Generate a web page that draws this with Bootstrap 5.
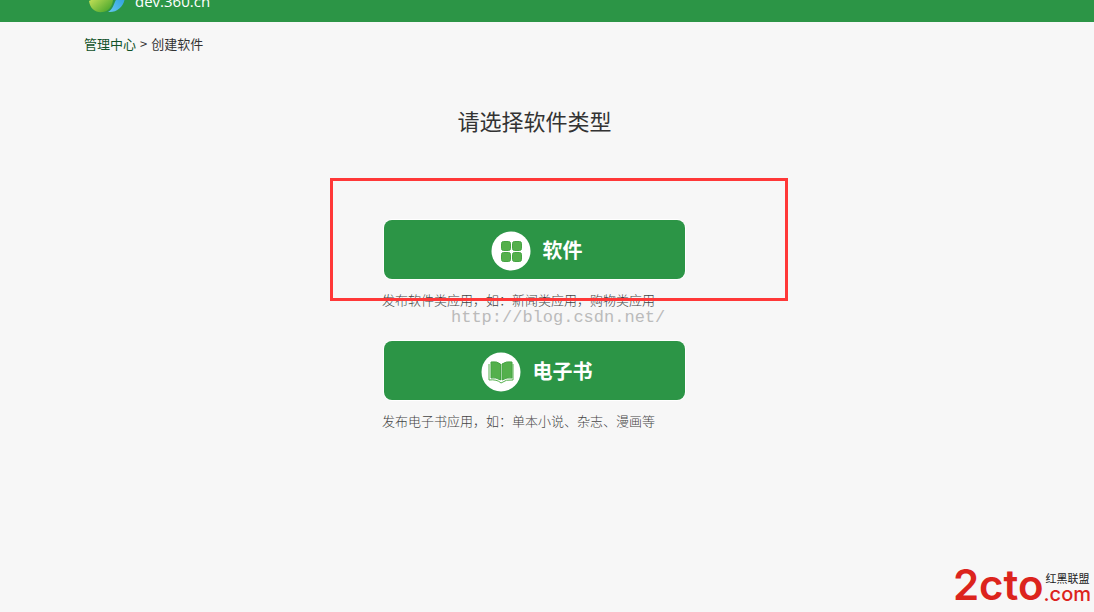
<!DOCTYPE html>
<html lang="zh-CN">
<head>
<meta charset="utf-8">
<meta name="viewport" content="width=device-width, initial-scale=1">
<title>创建软件</title>
<link href="https://cdn.jsdelivr.net/npm/bootstrap@5.3.0/dist/css/bootstrap.min.css" rel="stylesheet">
<style>
body { background: #f7f7f7; color: #333; font: 13px/20px "Noto Sans CJK SC", sans-serif; }
.topbar { height: 22px; background: #2c9546; }
.page-inset { padding-left: 84px; padding-right: 109px; }
.brand-link { color: #fff; font: 15px/20px "Open Sans", sans-serif; gap: 10px; padding-left: 5px; }
.brand-link span { padding-bottom: 3px; }
.crumbs a { color: #11522a; }
.crumbs { padding-top: 12px; gap: 4px; }
.page-title { font-size: 22px; line-height: 32px; font-weight: 400; margin: 50px 0 84px; }
.choices { width: 301px; gap: 31px; }
.type-btn { height: 59px; background: #2c9546; color: #fff; border: 0; border-radius: 8px; font-size: 20px; font-weight: 700; gap: 12px; box-shadow: 0 0 0 1px #fff; padding: 2px 0 0 4px; }
.type-btn:hover { background: #268640; color: #fff; }
.type-btn span { padding-bottom: 2px; }
.type-note { color: #444; margin: 11px -10px 0 -2px; font-weight: 300; white-space: nowrap; }
.highlight-frame { inset: -42px -103px auto -54px; height: 123px; border: 3px solid #ff3838; pointer-events: none; }
.watermark { left: 67px; top: 88px; color: #bbb; font: 17px/20px "Liberation Mono", monospace; }
.site-mark { right: 3px; bottom: 8px; color: #dc241d; font-family: Inter, sans-serif; }
.mark-main { font-size: 42px; line-height: 42px; font-weight: 600; margin-bottom: -2px; }
.mark-side { font-size: 20px; line-height: 20px; font-weight: 500; }
.mark-cn { font: 11px/12px "Noto Sans CJK SC", sans-serif; color: #222; padding-left: 2px; }
</style>
</head>
<body class="min-vh-100 position-relative">
<header class="topbar page-inset overflow-hidden d-flex align-items-end">
  <a href="#" class="brand-link d-flex align-items-end text-decoration-none pb-2">
    <svg width="36" height="32" viewBox="0 0 36 32" class="mt-auto" aria-hidden="true">
      <defs>
        <linearGradient id="leaf" x1="0" y1="0" x2="1" y2="1"><stop stop-color="#e5ef62"/><stop offset=".9" stop-color="#48a62c"/></linearGradient>
        <linearGradient id="sky" x1="1" y1="0" x2="0" y2="1"><stop stop-color="#279bda"/><stop offset="1" stop-color="#67c8f2"/></linearGradient>
      </defs>
      <path d="M0 19C5 17 11 12 23 10C26 17 23 29 14 30C7 31 1 27 0 19Z" fill="url(#leaf)"/>
      <path d="M36 14C36 23 29 31 19 30C25 27 25 19 29 15C31 12 34 12 36 14Z" fill="url(#sky)"/>
    </svg>
    <span>dev.360.cn</span>
  </a>
</header>
<main class="page-inset">
  <nav class="crumbs d-flex" aria-label="导航"><a href="#" class="text-decoration-none">管理中心</a><span>&gt;</span><span>创建软件</span></nav>
  <h1 class="page-title text-center">请选择软件类型</h1>
  <div class="choices d-flex flex-column mx-auto">
    <section class="position-relative">
      <button type="button" class="btn type-btn w-100 d-flex align-items-center justify-content-center">
        <svg width="40" height="40" viewBox="0 0 40 40" aria-hidden="true"><circle cx="20" cy="20" r="19.5" fill="#fff"/><g fill="#54b04c" stroke="#45a443"><rect x="10.5" y="10.5" width="9" height="9" rx="2"/><rect x="21.5" y="10.5" width="9" height="9" rx="2"/><rect x="10.5" y="21.5" width="9" height="9" rx="2"/><rect x="21.5" y="21.5" width="9" height="9" rx="2"/></g></svg>
        <span>软件</span>
      </button>
      <p class="type-note">发布软件类应用，如：新闻类应用，购物类应用</p>
      <div class="highlight-frame position-absolute"></div>
      <div class="watermark position-absolute">http://blog.csdn.net/</div>
    </section>
    <section>
      <button type="button" class="btn type-btn w-100 d-flex align-items-center justify-content-center">
        <svg width="40" height="40" viewBox="0 0 40 40" aria-hidden="true"><circle cx="20" cy="20" r="19.5" fill="#fff"/><path d="M10 10Q16 9 19.5 12V28Q15 25 10 26ZM31 10Q25 9 21 12V28Q26 25 31 26Z" fill="#54b04c" stroke="#45a443"/><path d="M8 12V28Q16 27 20 31Q25 27 32 28V12" fill="none" stroke="#54b04c"/></svg>
        <span>电子书</span>
      </button>
      <p class="type-note">发布电子书应用，如：单本小说、杂志、漫画等</p>
    </section>
  </div>
</main>
<div class="site-mark position-absolute d-flex align-items-end">
  <span class="mark-main">2cto</span>
  <span class="d-flex flex-column"><span class="mark-cn">红黑联盟</span><span class="mark-side">.com</span></span>
</div>
<script src="https://cdn.jsdelivr.net/npm/bootstrap@5.3.0/dist/js/bootstrap.bundle.min.js"></script>
</body>
</html>
